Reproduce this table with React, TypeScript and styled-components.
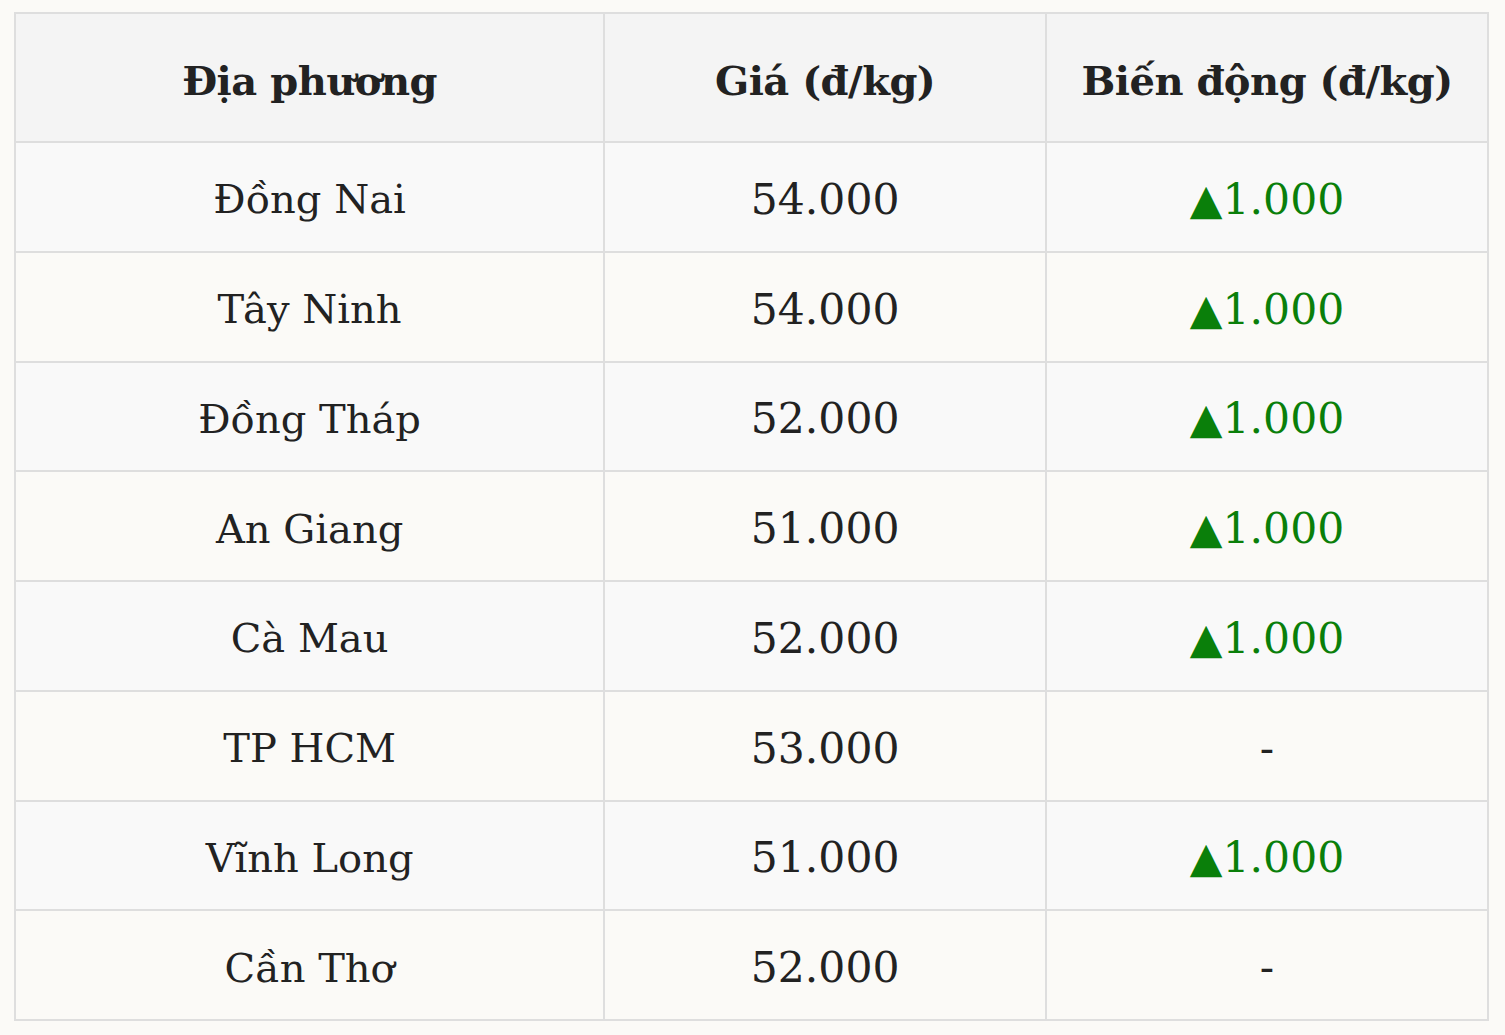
import React from "react";
import styled, { createGlobalStyle } from "styled-components";

type Row = { place: string; price: string; change: string | null };

const rows: Row[] = [
  { place: "Đồng Nai", price: "54.000", change: "1.000" },
  { place: "Tây Ninh", price: "54.000", change: "1.000" },
  { place: "Đồng Tháp", price: "52.000", change: "1.000" },
  { place: "An Giang", price: "51.000", change: "1.000" },
  { place: "Cà Mau", price: "52.000", change: "1.000" },
  { place: "TP HCM", price: "53.000", change: null },
  { place: "Vĩnh Long", price: "51.000", change: "1.000" },
  { place: "Cần Thơ", price: "52.000", change: null },
];

const App = () => {
  return (
    <Page>
      <GlobalStyle />
      <PriceTable>
        <colgroup>
          <col style={{ width: "40%" }} />
          <col style={{ width: "30%" }} />
          <col style={{ width: "30%" }} />
        </colgroup>
        <thead>
          <tr>
            <HeadCell>Địa phương</HeadCell>
            <HeadCell>Giá (đ/kg)</HeadCell>
            <HeadCell>Biến động (đ/kg)</HeadCell>
          </tr>
        </thead>
        <tbody>
          {rows.map((r) => (
            <BodyRow key={r.place}>
              <Cell>{r.place}</Cell>
              <Cell $numeric>{r.price}</Cell>
              <Cell $numeric>
                {r.change ? <Up>▲{r.change}</Up> : "-"}
              </Cell>
            </BodyRow>
          ))}
        </tbody>
      </PriceTable>
    </Page>
  );
};

export default App;

const GlobalStyle = createGlobalStyle`
  html, body {
    margin: 0;
    padding: 0;
    background: #fbfaf7;
  }
`;

const Page = styled.div`
  padding: 12px 16px 0 14px;
  font-family: "DejaVu Serif", "Liberation Serif", serif;
  color: #222;
`;

const PriceTable = styled.table`
  width: 100%;
  border-collapse: collapse;
  table-layout: fixed;
  border: 2px solid #dedede;
`;

const HeadCell = styled.th`
  height: 129px;
  background: #f4f4f4;
  border: 2px solid #dedede;
  font-size: 40px;
  font-weight: bold;
  text-align: center;
  vertical-align: middle;
  padding: 5px 0 0;
  box-sizing: border-box;
  letter-spacing: -0.5px;
`;

const BodyRow = styled.tr`
  background: #fbfaf7;

  &:nth-child(odd) {
    background: #f9f9f9;
  }
`;

const Cell = styled.td<{ $numeric?: boolean }>`
  height: 109.75px;
  box-sizing: border-box;
  border: 2px solid #dedede;
  font-size: ${(p) => (p.$numeric ? "42.5px" : "40px")};
  text-align: center;
  vertical-align: middle;
  padding: 5px 0 0;
`;

const Up = styled.span`
  color: #0a7f0a;
`;
